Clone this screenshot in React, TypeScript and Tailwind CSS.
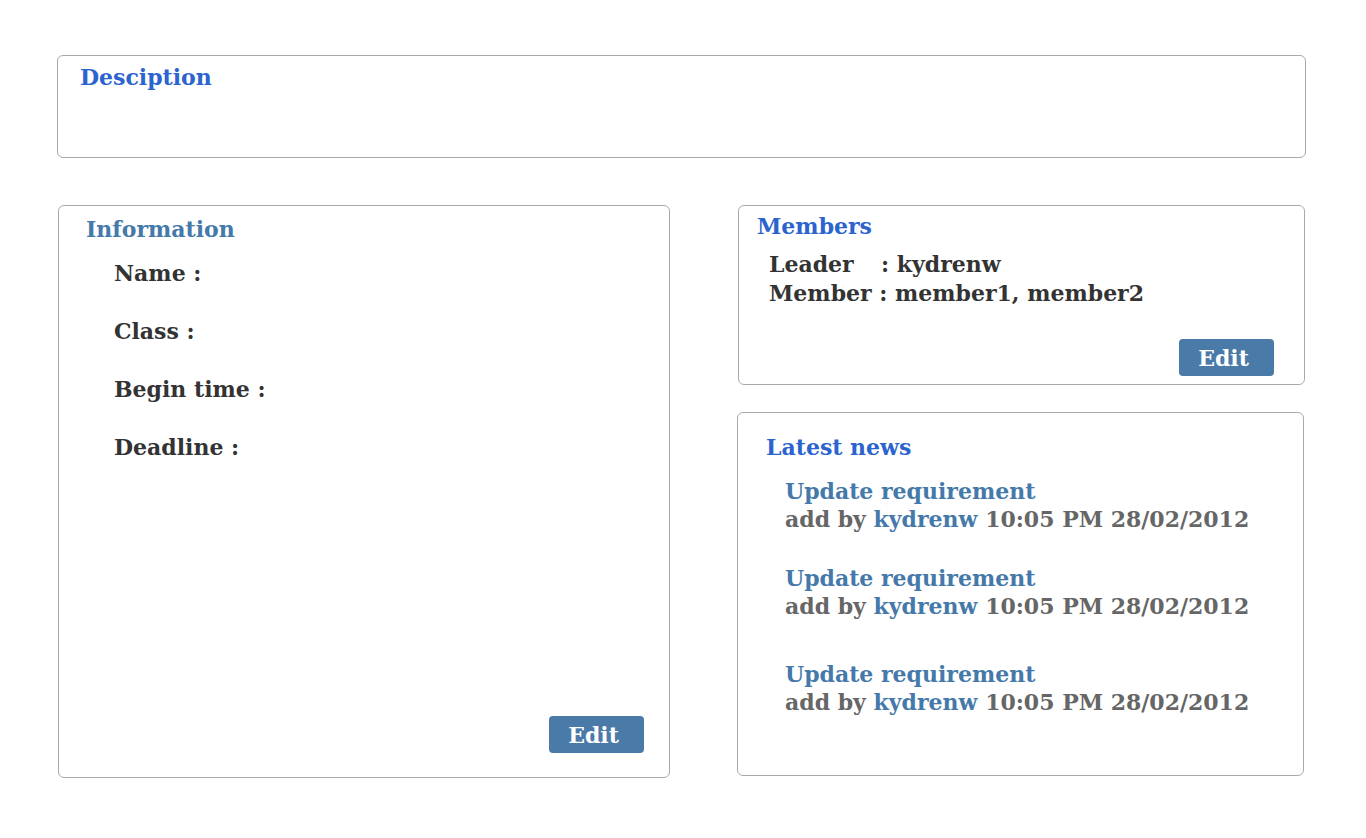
import React from 'react';

const news = [
  { title: 'Update requirement', author: 'kydrenw', time: '10:05 PM 28/02/2012', gap: 'mt-[16px]' },
  { title: 'Update requirement', author: 'kydrenw', time: '10:05 PM 28/02/2012', gap: 'mt-[31px]' },
  { title: 'Update requirement', author: 'kydrenw', time: '10:05 PM 28/02/2012', gap: 'mt-[40px]' },
];

function EditButton() {
  return (
    <button className="w-[95px] h-[37px] rounded-[4px] bg-[#4a7aa8] text-white text-[22px] font-bold leading-none pr-[6px]">
      Edit
    </button>
  );
}

export default function App() {
  return (
    <div className="min-h-screen w-full bg-white font-['DejaVu_Serif',serif] font-bold text-[22px] text-[#333333]">
      <div className="pt-[55px] pl-[57px] w-[1366px]">
        <section className="w-[1249px] h-[103px] rounded-[6px] border border-[#aaaaaa] pl-[22px] pt-[7px]">
          <h2 className="text-[#2b63cf] leading-[28px]">Desciption</h2>
        </section>

        <div className="flex mt-[47px]">
          <section className="ml-[1px] w-[612px] h-[573px] rounded-[6px] border border-[#aaaaaa] flex flex-col">
            <h2 className="pl-[27px] pt-[9px] text-[#4479a9] leading-[28px]">Information</h2>
            <div className="pl-[55px] flex flex-col gap-[30px] mt-[16px]">
              <p className="leading-[28px]">Name :</p>
              <p className="leading-[28px]">Class :</p>
              <p className="leading-[28px]">Begin time :</p>
              <p className="leading-[28px]">Deadline :</p>
            </div>
            <div className="mt-auto flex justify-end pr-[25px] pb-[24px]">
              <EditButton />
            </div>
          </section>

          <div className="ml-[68px] flex flex-col">
            <section className="w-[567px] h-[180px] rounded-[6px] border border-[#aaaaaa] flex flex-col">
              <h2 className="pl-[18px] pt-[6px] text-[#2b63cf] leading-[28px]">Members</h2>
              <div className="pl-[30px] mt-[10px] leading-[29px]">
                <p>
                  <span className="inline-block w-[112px]">Leader</span>: kydrenw
                </p>
                <p>Member : member1, member2</p>
              </div>
              <div className="mt-auto flex justify-end pr-[30px] pb-[8px]">
                <EditButton />
              </div>
            </section>

            <section className="mt-[27px] -ml-[1px] w-[567px] h-[364px] rounded-[6px] border border-[#aaaaaa] pl-[28px] pt-[20px]">
              <h2 className="text-[#2b63cf] leading-[28px]">Latest news</h2>
              {news.map((n, i) => (
                <div key={i} className={`${n.gap} pl-[19px] leading-[28px]`}>
                  <p className="text-[#4479a9]">{n.title}</p>
                  <p className="text-[#666666]">
                    add by <span className="text-[#4479a9]">{n.author}</span> {n.time}
                  </p>
                </div>
              ))}
            </section>
          </div>
        </div>
      </div>
    </div>
  );
}
